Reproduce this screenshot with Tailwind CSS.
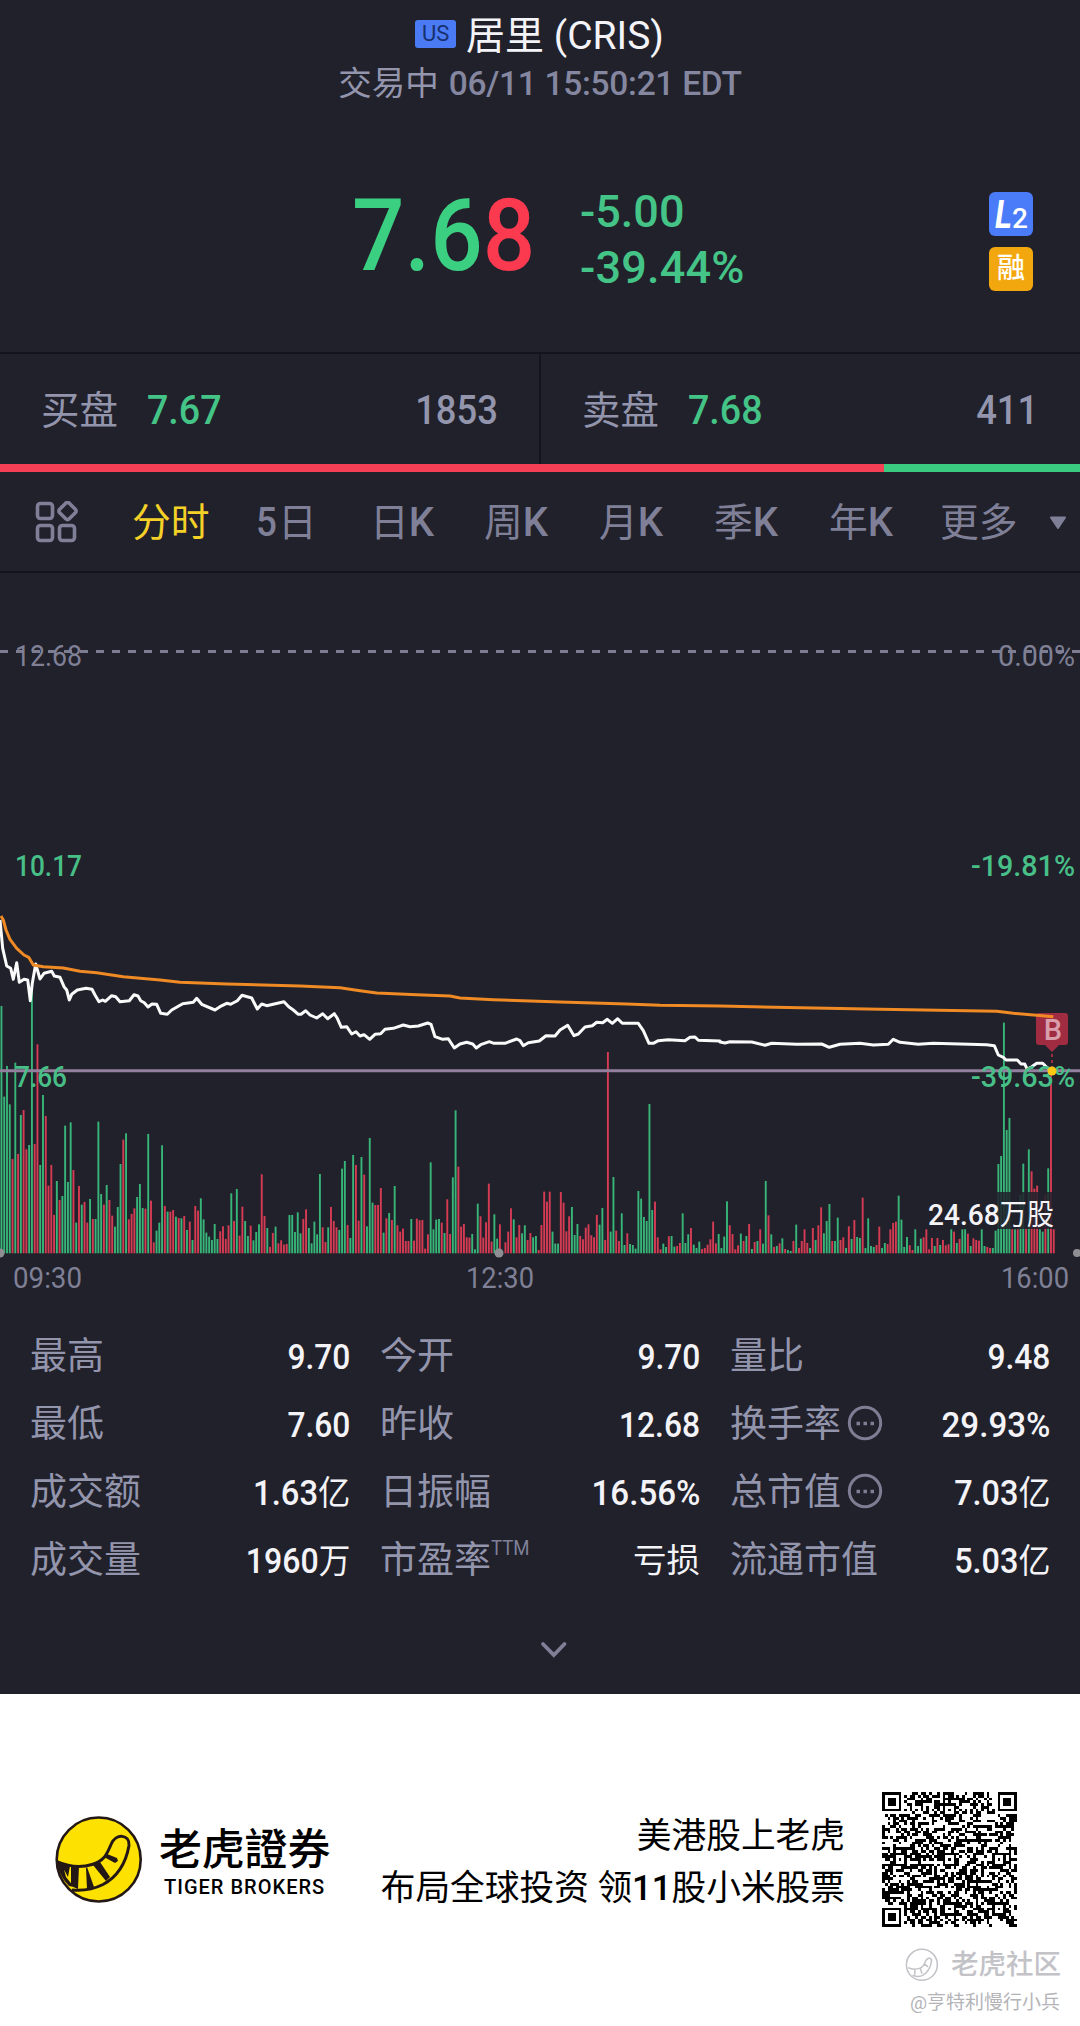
<!DOCTYPE html>
<html lang="zh-CN">
<head>
<meta charset="utf-8">
<title>居里 (CRIS)</title>
<script src="https://cdn.jsdelivr.net/npm/@tailwindcss/browser@4"></script>
</head>
<body class="w-[1080px] bg-white font-['Roboto','Noto_Sans_CJK_SC',sans-serif]">
<main class="flex h-[1694px] w-full flex-col overflow-hidden bg-[#21212b] text-[#9395ad]">

  <header class="flex h-[352px] shrink-0 flex-col">
    <div class="flex h-[70px] items-center justify-center pt-[1px] pr-[1px]">
      <span class="mb-[4px] flex h-7 w-[41px] items-center justify-center rounded-[3px] bg-[#4a7bf5] text-[22px] leading-none text-[#17306f]">US</span>
      <h1 class="ml-[10px] text-[39px] leading-[50px] text-[#f4f4f8]">居里 (CRIS)</h1>
    </div>
    <div class="flex h-[26px] items-center justify-center pt-[1px] text-[33.5px] leading-[26px]"><span>交易中</span><span class="ml-[10px] font-medium tracking-[-0.3px] text-[#8587a0]">06/11 15:50:21 EDT</span></div>
    <div class="flex h-[200px] pt-[78px]">
      <div class="ml-[352px] w-[228px]"><div class="flex h-[124px] w-max origin-left scale-x-[.925] items-center text-[100px] font-medium leading-none"><span class="text-[#3bcf82]">7.6</span><span class="text-[#fb3a50]">8</span></div></div>
      <div class="flex w-[400px] flex-col pt-[10px] text-[45px] font-medium leading-[56px] text-[#44c487]"><span>-5.00</span><span class="tracking-[0.2px]">-39.44%</span></div>
      <div class="ml-[9px] flex flex-col gap-[11px] pt-[18px] text-white">
        <span class="flex h-11 w-11 items-baseline justify-center rounded-md bg-[#4a7bf8] pr-[2px] leading-[46px]"><i class="origin-right scale-x-[.85] text-[38px] font-bold">L</i><span class="text-[28px] font-medium">2</span></span>
        <span class="flex h-11 w-11 items-center justify-center rounded-md bg-[#f3a70e] text-[28px] font-medium leading-none">融</span>
      </div>
    </div>
  </header>

  <section class="flex h-[112px] shrink-0 border-t-2 border-[#14141f] text-[40px] leading-[50px]">
    <div class="flex w-[541px] items-center border-r-2 border-[#14141f] pt-[3px] pl-[41px] pr-[41px]"><span class="text-[38.5px]">买盘</span><span class="ml-[29px] origin-left scale-x-[.94] font-medium text-[#44c487]">7.67</span><span class="ml-auto origin-right scale-x-[.91] font-medium">1853</span></div>
    <div class="flex w-[539px] items-center pt-[3px] pl-[41px] pr-[42px]"><span class="text-[38.5px]">卖盘</span><span class="ml-[29px] origin-left scale-x-[.94] font-medium text-[#44c487]">7.68</span><span class="ml-auto origin-right scale-x-[.91] font-medium">411</span></div>
  </section>
  <div class="flex h-2 shrink-0 bg-[#3bcb80]"><div class="w-[884px] bg-[#f53f54]"></div></div>

  <nav class="grid h-[101px] shrink-0 grid-cols-[132px_124px_114px_114px_115px_115px_115px_111px_108px_32px] items-center border-b-2 border-[#14141f] pt-[2px] text-[38.8px] leading-[50px] text-[#7f8098]">
    <svg class="mb-[2px] ml-[35px] h-[42px] w-[43px]" viewBox="0 0 43 42" fill="none" stroke="#7f8098" stroke-width="3.600"><rect x="2.500" y="2.500" width="15" height="15" rx="3"/><rect x="2.500" y="24.500" width="15" height="15" rx="3"/><rect x="24.500" y="24.500" width="15" height="15" rx="3"/><rect x="25.700" y="3.200" width="13.600" height="13.600" rx="2.500" transform="rotate(45 32.500 10)"/></svg>
    <span class="text-[#f5d128]">分时</span>
    <span class="flex"><span class="w-[22px] origin-left scale-x-[.92] text-[40px] font-medium">5</span>日</span>
    <span>日<span class="text-[40px] font-medium">K</span></span>
    <span>周<span class="text-[40px] font-medium">K</span></span>
    <span>月<span class="text-[40px] font-medium">K</span></span>
    <span>季<span class="text-[40px] font-medium">K</span></span>
    <span>年<span class="text-[40px] font-medium">K</span></span>
    <span>更多</span>
    <svg class="ml-[1px] h-[16px] w-[18px]" viewBox="0 0 18 16" fill="#7f8098" stroke="#7f8098" stroke-width="2" stroke-linejoin="round"><path d="M2 2.500h14L9 13z"/></svg>
  </nav>

  <svg class="block h-[737px] w-[1080px] shrink-0" viewBox="0 573 1080 737" fill="none">
    <path d="M0 651.500H1080" stroke="#7c7d92" stroke-width="3" stroke-dasharray="8 8"/>
    <g id="bars"></g>
    <path d="M0 1070.700H1080" stroke="#93809f" stroke-width="3"/>
    <path id="price" stroke="#fafafa" stroke-width="3" stroke-linejoin="round"/>
    <g font-size="30">
      <g fill="#7f8095">
        <text x="15" y="665.500" textLength="67" lengthAdjust="spacingAndGlyphs">12.68</text><text x="998" y="665.500" textLength="77" lengthAdjust="spacingAndGlyphs">0.00%</text>
        <text x="13" y="1288" textLength="69" lengthAdjust="spacingAndGlyphs">09:30</text><text x="466" y="1288" textLength="68" lengthAdjust="spacingAndGlyphs">12:30</text><text x="1001" y="1288" textLength="68" lengthAdjust="spacingAndGlyphs">16:00</text>
      </g>
      <g fill="#48bf87" font-weight="500">
        <text x="15" y="876" textLength="67" lengthAdjust="spacingAndGlyphs">10.17</text><text x="971" y="876" textLength="104" lengthAdjust="spacingAndGlyphs">-19.81%</text>
        <text x="15" y="1087" textLength="52" lengthAdjust="spacingAndGlyphs">7.66</text><text x="971" y="1087" textLength="104" lengthAdjust="spacingAndGlyphs">-39.63%</text>
      </g>
    </g>
    <rect x="923" y="1192" width="132" height="37" fill="#21212b" fill-opacity=".85"/>
    <text x="928" y="1225" font-size="30" fill="#f4f4f8" textLength="126" lengthAdjust="spacingAndGlyphs"><tspan font-weight="500">24.68</tspan><tspan font-size="29">万股</tspan></text>
    <path d="M1036 1016q0-3 3-3h26q3 0 3 3v26q0 3-3 3h-6l-7 7-7-7h-6q-3 0-3-3z" fill="#a02c42"/>
    <text x="1053" y="1040" font-size="29" font-weight="500" text-anchor="middle" fill="#d99dac">B</text>
    <path id="average" stroke="#ef8a24" stroke-width="3" stroke-linejoin="round"/>
    <path d="M1052 1054v14" stroke="#a02c42" stroke-width="2" stroke-dasharray="3 3"/>
    <circle cx="1052" cy="1071" r="4.500" fill="#fcc814"/>
    <g fill="#8f8f93"><circle cx="0" cy="1253" r="4.500"/><circle cx="499" cy="1253" r="4.500"/><circle cx="1077" cy="1253" r="4"/></g>
  </svg>

  <section class="grid shrink-0 grid-cols-3 gap-x-[30px] pt-[13px] pr-[30px] pl-[30px] text-[37px] leading-[48px]">
    <div class="flex h-[68px] items-center"><span>最高</span><b class="ml-auto origin-right scale-x-[.92] text-[34.5px] font-medium text-[#f4f4f8]">9.70</b></div>
    <div class="flex h-[68px] items-center"><span>今开</span><b class="ml-auto origin-right scale-x-[.92] text-[34.5px] font-medium text-[#f4f4f8]">9.70</b></div>
    <div class="flex h-[68px] items-center"><span>量比</span><b class="ml-auto origin-right scale-x-[.92] text-[34.5px] font-medium text-[#f4f4f8]">9.48</b></div>
    <div class="flex h-[68px] items-center"><span>最低</span><b class="ml-auto origin-right scale-x-[.92] text-[34.5px] font-medium text-[#f4f4f8]">7.60</b></div>
    <div class="flex h-[68px] items-center"><span>昨收</span><b class="ml-auto origin-right scale-x-[.92] text-[34.5px] font-medium text-[#f4f4f8]">12.68</b></div>
    <div class="flex h-[68px] items-center"><span>换手率</span><svg class="mb-[5px] ml-[6px] h-9 w-9" viewBox="0 0 36 36" fill="none" stroke="#7d7e94" stroke-width="3"><circle cx="18" cy="18" r="15.700"/><path d="M9.500 18.500h3.500M16.500 18.500H20M23.500 18.500H27" stroke-width="3.500"/></svg><b class="ml-auto origin-right scale-x-[.96] text-[34.5px] font-medium text-[#f4f4f8]">29.93%</b></div>
    <div class="flex h-[68px] items-center"><span>成交额</span><b class="ml-auto origin-right scale-x-[.95] text-[34.5px] font-medium text-[#f4f4f8]">1.63<span class="text-[34px] font-normal">亿</span></b></div>
    <div class="flex h-[68px] items-center"><span>日振幅</span><b class="ml-auto origin-right scale-x-[.96] text-[34.5px] font-medium text-[#f4f4f8]">16.56%</b></div>
    <div class="flex h-[68px] items-center"><span>总市值</span><svg class="mb-[5px] ml-[6px] h-9 w-9" viewBox="0 0 36 36" fill="none" stroke="#7d7e94" stroke-width="3"><circle cx="18" cy="18" r="15.700"/><path d="M9.500 18.500h3.500M16.500 18.500H20M23.500 18.500H27" stroke-width="3.500"/></svg><b class="ml-auto origin-right scale-x-[.94] text-[34.5px] font-medium text-[#f4f4f8]">7.03<span class="text-[34px] font-normal">亿</span></b></div>
    <div class="flex h-[68px] items-center"><span>成交量</span><b class="ml-auto origin-right scale-x-[.93] text-[34.5px] font-medium text-[#f4f4f8]">1960<span class="text-[34px] font-normal">万</span></b></div>
    <div class="flex h-[68px] items-center"><span>市盈率</span><span class="mb-[26px] origin-left scale-x-[.93] text-[20px] leading-none text-[#7f8098]">TTM</span><span class="ml-auto text-[33.5px] text-[#f4f4f8]">亏损</span></div>
    <div class="flex h-[68px] items-center"><span>流通市值</span><b class="ml-auto origin-right scale-x-[.94] text-[34.5px] font-medium text-[#f4f4f8]">5.03<span class="text-[34px] font-normal">亿</span></b></div>
  </section>
  <svg class="mt-[45px] ml-[540px] h-[20px] w-[28px] shrink-0" viewBox="0 0 28 20" fill="none" stroke="#7f8098" stroke-width="3.800" stroke-linecap="round"><path d="M3 4l10.800 11L24.500 4"/></svg>
</main>

<footer class="flex h-[332px] flex-col bg-white text-black">
  <div class="flex h-[234px] pt-[98px]">
    <svg class="mt-[23px] ml-[54px] h-[90px] w-[90px]" viewBox="54 1815 90 90" fill="none" stroke="#231815">
      <circle cx="98.700" cy="1859.500" r="42" fill="#fde100" stroke-width="2.600"/>
      <path d="M57 1861.500q18 8 35 3c13-4 15-11 19-20 5-12 19-10 18 1-3 17-11 31-26 39q-14 7-31 5.500" stroke-width="3"/>
      <path d="M60 1862l10 4-2 11zM71 1866h8l-1 23-7-3zM86 1868l1-1 7 20-7 2zM93 1865l7-3 10 15-4 4zM104 1857l3-3 10 4 1 3-3 2zM57 1862h5l4 15 8 10-5-1q-10-10-12-24z" fill="#231815" stroke="none"/>
    </svg>
    <div class="ml-[15px] w-[200px] pt-[29px]">
      <div class="text-[43px] font-medium leading-[50px] tracking-[-0.2px] font-['Noto_Sans_CJK_TC',sans-serif]">老虎證券</div>
      <div class="pt-[3px] pl-[5px] text-[20px] font-medium leading-[26px] tracking-[1.020px]">TIGER BROKERS</div>
    </div>
    <div class="flex w-[486px] flex-col items-end pt-[18px] text-[34.700px] leading-[52px]"><span>美港股上老虎</span><span class="whitespace-nowrap">布局全球投资 领<b class="font-medium">11</b>股小米股票</span></div>
    <svg id="qr" class="ml-[37px] h-[135px] w-[135px]" viewBox="0 0 49 49" shape-rendering="crispEdges"></svg>
  </div>
  <div class="flex items-center justify-end pt-[17px] pr-[19px] text-[#c2c2c7]">
    <svg class="mr-[12px] h-[34px] w-[34px]" viewBox="54 1815 90 90" fill="none" stroke="#c2c2c7" stroke-width="4"><circle cx="98.700" cy="1859.500" r="41"/><path d="M62 1867q15 7 30 2c13-4 13-14 18-22 5-8 16-6 14 4-3 17-11 29-22 36-9 5-22 4-28 0M80 1870v16M94 1867l5 16M105 1857l10 8"/></svg>
    <span class="text-[27.500px] font-medium leading-[40px]">老虎社区</span>
  </div>
  <div class="pt-[5px] pr-[20px] text-right text-[19px] leading-[25px] text-[#b4b4b8]">@亨特利慢行小兵</div>
</footer>

<script>
const NS = 'http://www.w3.org/2000/svg';
const make = (parent, name, attrs) => { const e = document.createElementNS(NS, name); for (const k in attrs) e.setAttribute(k, attrs[k]); parent.appendChild(e); };

// Minute volumes: bar tops in thirds of a pixel; g = down tick, r = up tick
const a = 'g498 g770 g678 g793 r957 g668 r942 g825 r810 r928 g915 g440 r912 r613 g975 g765 r828 r1037 r975 r1125 g1023 r1080 g1068 g857 g1026 g847 r990 g1148 r1038 g1094 r1086 r1148 g1077 r1137 g1137 g845 g1062 r1094 g1035 r1080 r1127 g1160 g1101 g972 r899 g880 r1138 r1122 r1105 g1071 g1032 g1104 r1106 g882 r1082 r1207 g1172 g1148 g916 r1098 g1115 r1115 r1110 g1130 r1134 g1135 r1128 g1170 r1145 g1200 r1098 r1112 g1075 g1138 g1178 g1190 g1200 g1152 g1197 r1174 r1159 r1197 r1156 g1060 r1143 g1047 r1187 r1100 g1143 g1188 r1157 g1201 g1176 g1153 r1003 r1128 g1164 r1221 r1179 g1160 r1210 r1201 r1214 r1212 g1125 g1125 g1176 g1117 g1180 r1137 r1108 g1164 g1210 g1145 g1183 g1002 r1162 r1206 g1162 r1101 r1143 r1162 g1170 g986 g963 r1155 g1194 g945 r975 r1142';
const b = 'g591 r644 g799 g534 g728 r735 r735 r684 g818 r775 g759 r780 g678 r796 r815 r806 r843 r843 g777 r842 r776 r781 r780 r866 r823 g607 g808 g779 g777 r788 g819 r718 r822 g652 g451 r620 r800 r792 r832 r833 g822 g868 g731 r769 r833 r787 r671 r845 g763 g836 r793 r880 r847 r815 r745 g778 r832 r795 g820 g796 r840 r819 g832 g828 r870 r795 r695 r725 r695 g815 g851 g851 r696 r728 r814 r769 g741 g825 g792 r828 r838 r803 r793 r826 r832 r765 g794 g744 r840 r276 g815 g651 r812 r843 g760 g855 r820 g852 g855 g866 g693 g716 g771 g783 g432 g750 r725 r832 r868 g851 g861 r829 g828 g860 r858 r849 g760 g849 g823 r804 g854 g864 g845 r867 r864 r854 r838 r785 r850 g822';
const c = 'g864 g830 g724 r796 r822 r868 r856 g821 r843 g828 r792 g867 r846 g843 r808 g851 g663 r766 g823 r861 g858 r850 g835 r867 g870 g873 r843 g794 r864 r843 r808 r849 g864 r804 g840 r796 r742 g820 g783 g732 r843 g843 g773 r840 r832 g864 r799 g837 r780 g831 g834 r713 g864 g775 g858 g861 r855 r800 g864 g849 r852 r808 r789 r785 g707 g779 g861 g831 r856 r870 g808 g858 g836 r832 r808 r868 r834 g858 r834 g855 r840 r856 r853 g808 r815 g849 r837 g808 g808 r821 g858 r835 r840 r842 g808 g858 r861 r864 g864 g812 g612 g588 g188 g510 g474 r808 g808 r808 g705 g611 r805 g568 r634 r686 r677 g808 g815 r705 g625 r340 r808';
const bars = document.getElementById('bars');
let i = 0;
for (const [set, base] of [[a, 1240], [b, 880], [c, 880]])
  for (const v of set.split(' ')) {
    const h = (base - +v.slice(1)) / 3;
    make(bars, 'rect', { x: (0.500 + i * 2.7692).toFixed(2), y: (1253.300 - h).toFixed(2), width: 1.9, height: h.toFixed(2), fill: v[0] === 'g' ? '#38b679' : '#d63b54' });
    i++;
  }

const line = (id, parts) => {
  const pts = [];
  for (const [ox, oy, s] of parts) { const n = s.split(/[ ,]/).map(Number); for (let k = 0; k < n.length; k += 2) pts.push((ox + n[k] / 3).toFixed(1) + ' ' + (oy + n[k + 1] / 3).toFixed(1)); }
  document.getElementById(id).setAttribute('d', 'M' + pts.join('L'));
};
line('price', [
  [0, 840, '0,240 8,325 20,378 32,385 40,418 50,368 58,427 72,418 83,420 91,482 97,430 107,372 120,417 132,400 155,394 163,408 180,412 192,440 200,450 208,480 215,463 232,450 258,445 276,448 285,465 297,485 308,480 316,484 335,467 347,470 360,485 388,482 402,464 414,468 422,482 433,488 444,501 456,492 470,493 482,520 502,523 515,510 548,491 580,487 590,475 605,493 645,510 660,500 680,490 692,493 712,482 726,466 755,474 772,507 785,492 800,497 852,485 866,500 880,510 895,523 903,523 917,512 930,525 950,534 968,521 983,536 1003,521 1012,535 1024,562 1040,560 1055,582 1068,575 1080,588'],
  [360, 960, '0,228 12,224 29,238 45,223 62,221 75,208 100,205 130,195 150,200 175,198 203,189 213,193 225,230 248,238 265,236 283,264 300,252 320,247 338,252 349,264 362,254 388,245 402,250 435,250 470,237 480,242 490,257 505,248 538,243 558,227 585,228 600,210 623,196 642,227 655,222 675,201 697,197 710,187 728,188 742,178 757,190 773,176 787,190 835,190 850,212 867,250 880,250 895,242 925,239 975,242 990,232 1005,231 1015,241 1080,243'],
  [720, 960, '0,246 15,249 30,245 95,246 135,256 155,250 230,253 305,252 328,262 360,253 420,250 460,255 505,253 520,238 540,247 595,253 640,250 800,254 823,257 835,285 850,292 858,300 892,300 903,312 914,312 922,328 935,320 950,310 968,310 980,322 996,332']]);
line('average', [
  [0, 840, '3,228 10,240 18,270 30,298 50,325 72,345 86,352 100,375 130,380 190,384 240,394 290,398 370,410 480,420 540,427 680,432 900,438 1020,443'],
  [360, 960, '0,92 50,99 170,104 270,108 300,114 400,119 600,126 800,132 900,136 1080,138'],
  [720, 960, '240,143 480,148 830,154 880,160 950,166 1000,170']]);

// QR symbol, version 8: finder, timing and alignment patterns around the data modules
const N = 49, ring = (x, y, cx, cy) => Math.max(Math.abs(x - cx), Math.abs(y - cy));
let seed = 20190611, d = '';
const rnd = () => (seed = (seed * 1103515245 + 12345) % 2147483648) / 2147483648;
for (let y = 0; y < N; y++) for (let x = 0; x < N; x++) {
  let on = rnd() < 0.52;
  if (x === 6 || y === 6) on = (x + y) % 2 === 0;
  for (const [cx, cy] of [[24, 6], [6, 24], [24, 24], [42, 24], [24, 42], [42, 42]]) { const r = ring(x, y, cx, cy); if (r <= 2) on = r !== 1; }
  for (const [cx, cy] of [[3, 3], [45, 3], [3, 45]]) { const r = ring(x, y, cx, cy); if (r <= 4) on = r !== 2 && r !== 4; }
  if (on) d += `M${x} ${y}h1v1h-1z`;
}
make(document.getElementById('qr'), 'path', { d, fill: '#000' });
</script>
</body>
</html>
